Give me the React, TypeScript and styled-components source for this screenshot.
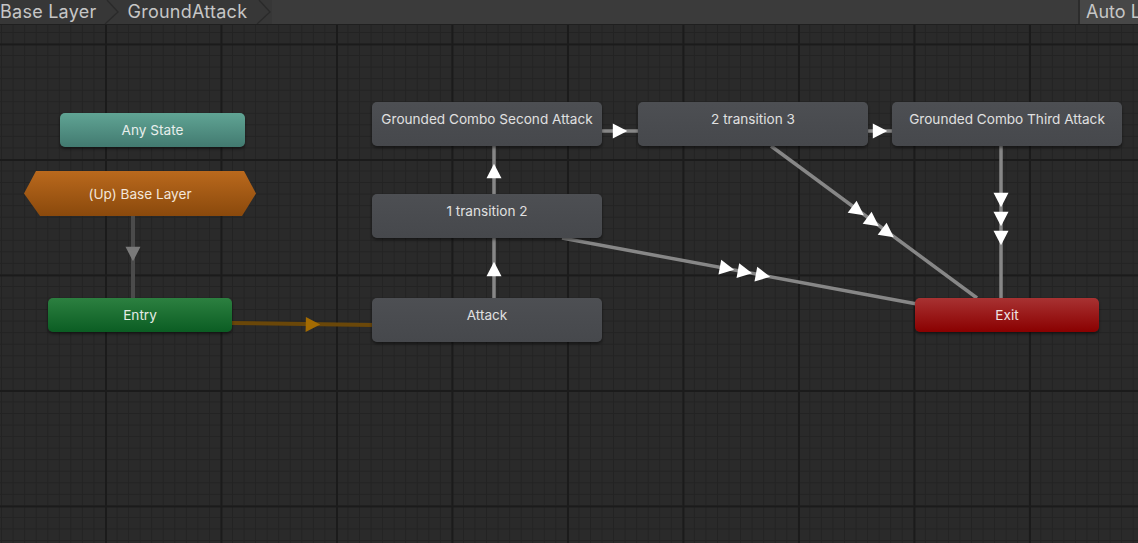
import React from "react";
import styled, { createGlobalStyle, css } from "styled-components";

const TOP = 25;

const GlobalStyle = createGlobalStyle`
  html, body { margin: 0; padding: 0; background: #2a2a2a; }
  body { font-family: Inter, "Noto Sans", sans-serif; overflow: hidden; }
  * { box-sizing: border-box; }
`;

const Window = styled.div`
  width: 1138px;
  height: 543px;
  display: flex;
  flex-direction: column;
  overflow: hidden;
`;

const Toolbar = styled.div`
  height: 25px;
  flex: none;
  display: flex;
  align-items: stretch;
  background: #3b3b3b;
  border-bottom: 1px solid #1f1f1f;
`;

const Crumbs = styled.div`
  display: flex;
  align-items: stretch;
  background: #373737;
`;

const Crumb = styled.div<{ $first?: boolean }>`
  display: flex;
  align-items: center;
  gap: ${(p) => (p.$first ? "7px" : "9px")};
  padding-left: ${(p) => (p.$first ? "0" : "8px")};
  font-size: 18px;
  line-height: 22px;
  letter-spacing: 0.25px;
  color: #c6c6c6;
  white-space: nowrap;
`;

const Chevron = styled.svg`
  width: 16px;
  height: 24px;
  flex: none;
`;

const Spacer = styled.div`
  flex: 1;
`;

const ToolButton = styled.div`
  display: flex;
  align-items: center;
  padding-left: 6px;
  width: 60px;
  background: #474747;
  border-left: 2px solid #2c2c2c;
  font-size: 18px;
  line-height: 22px;
  color: #c6c6c6;
  white-space: nowrap;
  overflow: hidden;
`;

const Canvas = styled.div`
  position: relative;
  flex: 1;
  background-color: #2a2a2a;
  background-image: linear-gradient(to right, #1b1b1b 2px, transparent 2px),
    linear-gradient(to bottom, #1b1b1b 2px, transparent 2px),
    linear-gradient(to right, #232323 1px, transparent 1px),
    linear-gradient(to bottom, #232323 1px, transparent 1px);
  background-size: 115.5px 115.5px, 115.5px 115.5px, 11.55px 11.55px,
    11.55px 11.55px;
  background-position: 105px 18.5px;
`;

const Edges = styled.svg`
  position: absolute;
  left: 0;
  top: 0;
  width: 1138px;
  height: 518px;
`;

type Kind = "state" | "any" | "entry" | "exit";

const kindStyles: Record<Kind, ReturnType<typeof css>> = {
  state: css`
    background: linear-gradient(#4d4f53, #46484c);
    align-items: flex-start;
    padding-top: 9px;
    color: #e0e0e0;
  `,
  any: css`
    background: linear-gradient(#60a494, #427a70);
    align-items: center;
    color: #e8eeec;
  `,
  entry: css`
    background: linear-gradient(#2c8040, #0b5d23);
    align-items: center;
    color: #e4ece6;
  `,
  exit: css`
    background: linear-gradient(#a83232, #8a0000);
    align-items: center;
    color: #efe2e2;
  `,
};

const Node = styled.div<{ $x: number; $y: number; $w: number; $h: number; $kind: Kind }>`
  position: absolute;
  left: ${(p) => p.$x}px;
  top: ${(p) => p.$y - TOP}px;
  width: ${(p) => p.$w}px;
  height: ${(p) => p.$h}px;
  display: flex;
  justify-content: center;
  border-radius: 5px;
  font-size: 13.6px;
  line-height: 16px;
  white-space: nowrap;
  box-shadow: 0 2px 3px rgba(0, 0, 0, 0.45);
  ${(p) => kindStyles[p.$kind]}
`;

const LayerNode = styled.div<{ $x: number; $y: number; $w: number; $h: number }>`
  position: absolute;
  left: ${(p) => p.$x}px;
  top: ${(p) => p.$y - TOP}px;
  width: ${(p) => p.$w}px;
  height: ${(p) => p.$h}px;
  display: flex;
  align-items: center;
  justify-content: center;
  background: linear-gradient(#ba691d, #8a490c);
  clip-path: polygon(12px 0, calc(100% - 12px) 0, 100% 50%, calc(100% - 14px) 100%, 16px 100%, 0 50%);
  color: #f2e6da;
  font-size: 13.6px;
  line-height: 16px;
  white-space: nowrap;
`;

const nodes: { label: string; x: number; y: number; w: number; h: number; kind: Kind }[] = [
  { label: "Any State", x: 60, y: 113, w: 185, h: 34, kind: "any" },
  { label: "Entry", x: 48, y: 298, w: 184, h: 34, kind: "entry" },
  { label: "Exit", x: 915, y: 298, w: 184, h: 34, kind: "exit" },
  { label: "Grounded Combo Second Attack", x: 372, y: 102, w: 230, h: 44, kind: "state" },
  { label: "2 transition 3", x: 638, y: 102, w: 230, h: 44, kind: "state" },
  { label: "Grounded Combo Third Attack", x: 892, y: 102, w: 230, h: 44, kind: "state" },
  { label: "1 transition 2", x: 372, y: 194, w: 230, h: 44, kind: "state" },
  { label: "Attack", x: 372, y: 298, w: 230, h: 44, kind: "state" },
];

function arrowPoints(cx: number, cy: number, angle: number, len = 14.5, half = 7.5) {
  const dx = Math.cos(angle);
  const dy = Math.sin(angle);
  const nx = -dy;
  const ny = dx;
  const tip = [cx + (dx * len) / 2, cy + (dy * len) / 2];
  const bx = cx - (dx * len) / 2;
  const by = cy - (dy * len) / 2;
  const a = [bx + nx * half, by + ny * half];
  const b = [bx - nx * half, by - ny * half];
  return [tip, a, b].map((p) => `${p[0].toFixed(1)},${p[1].toFixed(1)}`).join(" ");
}

type Edge = {
  from: [number, number];
  to: [number, number];
  arrows: [number, number][];
  color: string;
  arrowColor: string;
  width: number;
};

const edges: Edge[] = [
  { from: [133, 216], to: [133, 298], arrows: [[133, 254]], color: "#4b4b4b", arrowColor: "#7a7a7a", width: 4 },
  { from: [232, 323], to: [372, 325], arrows: [[313, 324.5]], color: "#6a4709", arrowColor: "#a36b02", width: 4 },
  { from: [494, 298], to: [494, 238], arrows: [[494, 269]], color: "#878787", arrowColor: "#ffffff", width: 3.5 },
  { from: [494, 194], to: [494, 146], arrows: [[494, 171]], color: "#878787", arrowColor: "#ffffff", width: 3.5 },
  { from: [602, 131], to: [638, 131], arrows: [[620, 131]], color: "#878787", arrowColor: "#ffffff", width: 3.5 },
  { from: [868, 131], to: [892, 131], arrows: [[880, 131]], color: "#878787", arrowColor: "#ffffff", width: 3.5 },
  { from: [771, 146], to: [977, 298], arrows: [[858, 211], [873, 222], [888, 233]], color: "#878787", arrowColor: "#ffffff", width: 3.5 },
  { from: [562, 238], to: [917, 304], arrows: [[727, 268.5], [745, 272], [763, 275.5]], color: "#878787", arrowColor: "#ffffff", width: 3.5 },
  { from: [1001, 146], to: [1001, 298], arrows: [[1001, 200], [1001, 219], [1001, 238]], color: "#878787", arrowColor: "#ffffff", width: 3.5 },
];

function EdgeLayer() {
  return (
    <Edges viewBox={`0 ${TOP} 1138 518`}>
      {edges.map((e, i) => {
        const ang = Math.atan2(e.to[1] - e.from[1], e.to[0] - e.from[0]);
        return (
          <g key={i}>
            <line x1={e.from[0]} y1={e.from[1]} x2={e.to[0]} y2={e.to[1]} stroke={e.color} strokeWidth={e.width} />
            {e.arrows.map((a, j) => (
              <polygon key={j} points={arrowPoints(a[0], a[1], ang)} fill={e.arrowColor} />
            ))}
          </g>
        );
      })}
    </Edges>
  );
}

function ChevronIcon() {
  return (
    <Chevron viewBox="0 0 16 24">
      <polyline points="3,0 14,12 1,24" fill="none" stroke="#2a2a2a" strokeWidth="1.3" />
    </Chevron>
  );
}

export default function App() {
  return (
    <>
      <GlobalStyle />
      <Window>
        <Toolbar>
          <Crumbs>
            <Crumb $first>
              Base Layer
              <ChevronIcon />
            </Crumb>
            <Crumb>
              GroundAttack
              <ChevronIcon />
            </Crumb>
          </Crumbs>
          <Spacer />
          <ToolButton>Auto Live Link</ToolButton>
        </Toolbar>
        <Canvas>
          <EdgeLayer />
          <LayerNode $x={24} $y={171} $w={232} $h={45}>
            (Up) Base Layer
          </LayerNode>
          {nodes.map((n) => (
            <Node key={n.label} $x={n.x} $y={n.y} $w={n.w} $h={n.h} $kind={n.kind}>
              {n.label}
            </Node>
          ))}
        </Canvas>
      </Window>
    </>
  );
}
